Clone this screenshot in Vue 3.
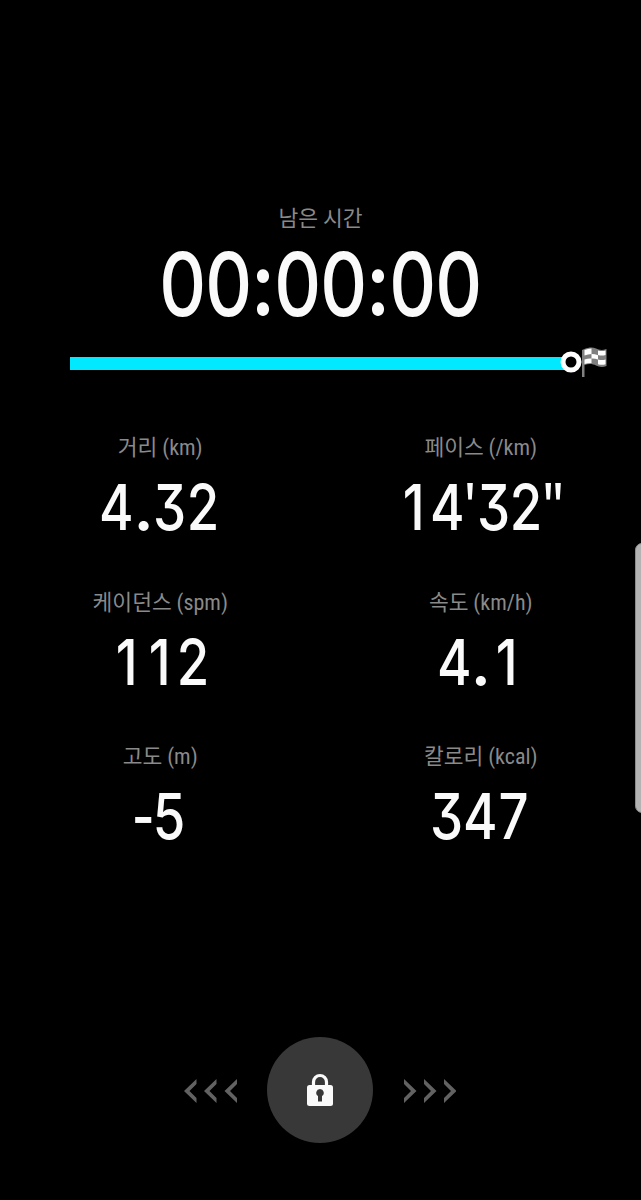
<template>
  <div class="workout">
    <section class="timer">
      <div class="label">남은 시간</div>
      <div class="time">
        <span v-for="(ch, i) in remaining" :key="i" class="cell" :class="getCellClass(ch)"><span>{{ ch }}</span></span>
      </div>
      <div class="progress">
        <div class="track">
          <div class="fill" :style="{ width: progress + '%' }"></div>
        </div>
        <svg class="knob" width="22" height="22" viewBox="0 0 22 22">
          <circle cx="11" cy="11" r="8" fill="#000" stroke="#fff" stroke-width="5" />
        </svg>
        <svg class="flag" width="28" height="32" viewBox="0 0 28 32">
          <path d="M1 4l2.500-1C8 1 12 1 15 2.500s6 2 10.500.5v17c-4 1.500-7.500 1-10.500-.5s-7-2-11.500-.5v12H1z" fill="#808080" />
          <path d="M3.500 4q3.500-1.500 7-1.500v5.500q-3.500 0-7 1.500zM17 4.500q4 1 7.500 0v4.500q-3.500 1-7.500 0zM10.500 8q3.500 0 6.500 1.200v4.300q-3-1.200-6.500-1zM3.500 13.500q3.500-1.200 7-1v4.500q-3.500 0-7 1zM17 13.500q4 1 7.500 0v4.800q-3.500 1-7.500 0z" fill="#fff" />
        </svg>
      </div>
    </section>

    <section class="stats">
      <div v-for="item in stats" :key="item.name" class="stat">
        <div class="label">{{ item.name }} <span class="unit">({{ item.unit }})</span></div>
        <div class="value">
          <span v-for="(ch, i) in item.value" :key="i" class="cell" :class="getCellClass(ch)"><span>{{ ch }}</span></span>
        </div>
      </div>
    </section>

    <div class="lock-bar">
      <svg class="arrows" width="54" height="24" viewBox="0 0 54 24">
        <path v-for="x in [0, 20, 40.5]" :key="x" :transform="`translate(${x} 0)`" d="M12.500 0v5L5.500 12l7 7v5L0 12z" />
      </svg>
      <button class="lock" aria-label="잠금">
        <svg width="26" height="33" viewBox="0 0 26 33">
          <path d="M6.500 14V9a6.500 6.500 0 0 1 13 0v5" fill="none" stroke="#fafafa" stroke-width="3.200" />
          <rect y="12" width="26" height="21" rx="2.500" fill="#fafafa" />
          <path d="M13 16a3.800 3.800 0 0 0-2 7v5.500h4V23a3.800 3.800 0 0 0-2-7z" fill="#383838" />
        </svg>
      </button>
      <svg class="arrows" width="54" height="24" viewBox="0 0 54 24">
        <path v-for="x in [2, 22, 42]" :key="x" :transform="`translate(${x} 0)`" d="M0 0l12.500 12L0 24v-5l7-7-7-7z" />
      </svg>
    </div>

    <div class="edge-handle"></div>
  </div>
</template>

<script setup>
import { ref } from 'vue';

const remaining = ref('00:00:00');
const progress = ref(100);

const stats = ref([
  { name: '거리', unit: 'km', value: '4.32' },
  { name: '페이스', unit: '/km', value: '14\'32"' },
  { name: '케이던스', unit: 'spm', value: '112' },
  { name: '속도', unit: 'km/h', value: '4.1' },
  { name: '고도', unit: 'm', value: '-5' },
  { name: '칼로리', unit: 'kcal', value: '347' },
]);

// 숫자는 고정 폭, 기호는 종류별 폭
const getCellClass = (ch) => {
  return {
    ':': 'colon',
    '.': 'dot',
    '-': 'minus',
    "'": 'minute',
    '"': 'second',
  }[ch] || 'digit';
};
</script>

<style>
body {
  margin: 0;
  background: #000;
}
</style>

<style scoped>
.workout {
  position: relative;
  box-sizing: border-box;
  width: 641px;
  height: 1200px;
  padding-top: 202px;
  overflow: hidden;
  background: #000;
  color: #fafafa;
  font-family: Inter, "Noto Sans CJK KR", sans-serif;
}
.label {
  height: 30px;
  color: #8a8a8a;
  font-family: "Noto Sans CJK KR", sans-serif;
  font-size: 21.5px;
  line-height: 30px;
  text-align: center;
  white-space: nowrap;
}
.unit {
  font-family: Roboto, sans-serif;
  font-stretch: 75%;
  font-size: 22px;
}
.time,
.value {
  display: flex;
  justify-content: center;
  font-weight: 500;
  font-feature-settings: "cv09", "calt" 0;
}
.cell {
  display: flex;
  justify-content: center;
  width: 33.5px;
}
.digit > span {
  transform: translateX(-0.5px) scaleX(0.83);
}
.time {
  height: 104px;
  font-size: 88.5px;
  line-height: 104px;
}
.time .digit {
  width: 45.5px;
}
.time .digit > span {
  transform: scaleX(0.82);
}
.colon {
  width: 24px;
  font-weight: 600;
}
.colon > span {
  transform: translateY(-1.5px) scaleX(0.87);
}
.dot {
  width: 19px;
  font-weight: 600;
}
.minus {
  width: 19.5px;
}
.minus > span {
  transform: translateX(-0.5px) scaleX(0.78);
}
.minute {
  width: 12.5px;
  font-family: "Noto Sans", sans-serif;
}
.second {
  width: 20.5px;
  font-family: "Noto Sans", sans-serif;
}
.minute > span,
.second > span {
  transform: translate(-0.5px, -2px) scaleX(0.8);
}
.progress {
  position: relative;
  height: 32px;
  margin: 10px 70px 0;
}
.track {
  padding-top: 11px;
}
.fill {
  height: 13px;
  background: #00e9ff;
}
.knob {
  position: absolute;
  top: 5px;
  right: -11px;
}
.flag {
  position: absolute;
  top: 0;
  right: -38px;
}
.stats {
  display: grid;
  grid-template-columns: 1fr 1fr;
  grid-auto-rows: 154.5px;
  margin-top: 53px;
}
.value {
  height: 92px;
  font-size: 63.5px;
  line-height: 92px;
}
.lock-bar {
  display: flex;
  align-items: center;
  justify-content: center;
  gap: 29px;
  margin: 142px 1px 0 0;
}
.arrows {
  margin-top: 2px;
  fill: #626262;
}
.lock {
  display: flex;
  align-items: center;
  justify-content: center;
  width: 106px;
  height: 106px;
  padding: 0;
  border: 0;
  border-radius: 50%;
  background: #383838;
}
.edge-handle {
  position: absolute;
  top: 543px;
  right: -8px;
  box-sizing: border-box;
  width: 14px;
  height: 270px;
  border: 1px solid #8c8c8c;
  border-radius: 8px;
  background: #b3b3b3;
}
</style>
